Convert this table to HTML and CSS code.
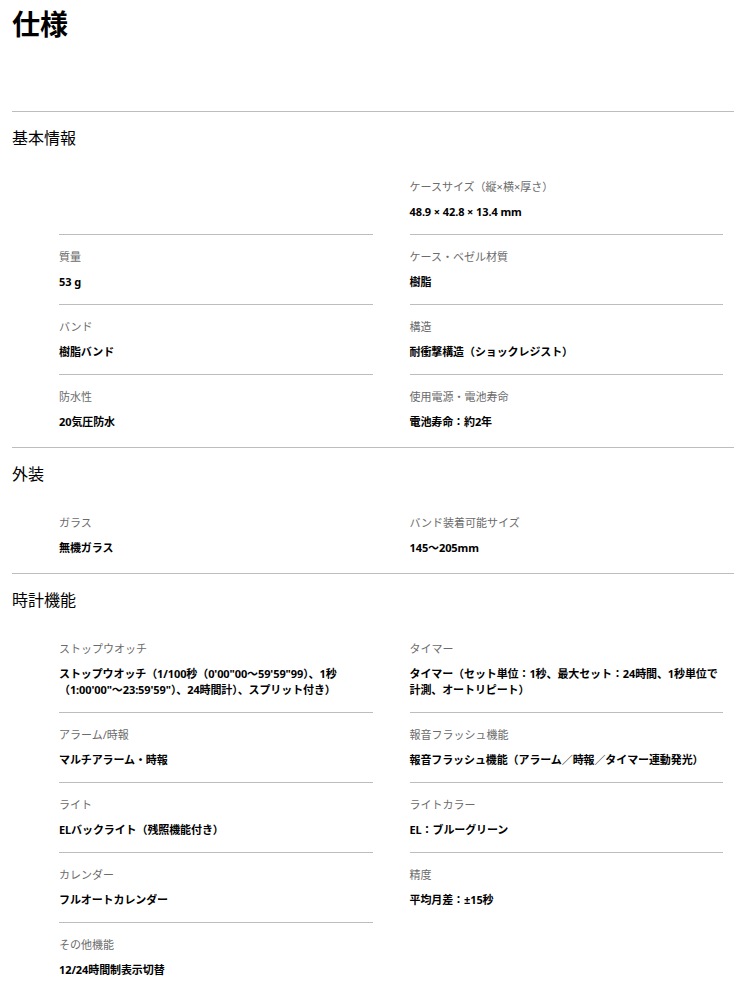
FILE: index.html
```html
<!DOCTYPE html>
<html lang="ja">
<head>
<meta charset="utf-8">
<title>仕様</title>
<link rel="stylesheet" href="styles.css">
</head>
<body>
<div class="page">
  <h1 class="title">仕様</h1>

  <section class="section">
    <h2 class="section-title">基本情報</h2>
    <div class="grid">
      <div class="item"></div>
      <div class="item"><div class="label">ケースサイズ（縦×横×厚さ）</div><div class="value">48.9 × 42.8 × 13.4 mm</div></div>
      <div class="item"><div class="label">質量</div><div class="value">53 g</div></div>
      <div class="item"><div class="label">ケース・ベゼル材質</div><div class="value">樹脂</div></div>
      <div class="item"><div class="label">バンド</div><div class="value">樹脂バンド</div></div>
      <div class="item"><div class="label">構造</div><div class="value">耐衝撃構造（ショックレジスト）</div></div>
      <div class="item last"><div class="label">防水性</div><div class="value">20気圧防水</div></div>
      <div class="item last"><div class="label">使用電源・電池寿命</div><div class="value">電池寿命：約2年</div></div>
    </div>
  </section>

  <section class="section">
    <h2 class="section-title">外装</h2>
    <div class="grid">
      <div class="item last"><div class="label">ガラス</div><div class="value">無機ガラス</div></div>
      <div class="item last"><div class="label">バンド装着可能サイズ</div><div class="value">145～205mm</div></div>
    </div>
  </section>

  <section class="section">
    <h2 class="section-title">時計機能</h2>
    <div class="grid">
      <div class="item"><div class="label">ストップウオッチ</div><div class="value">ストップウオッチ（1/100秒（0'00"00～59'59"99）、1秒（1:00'00"～23:59'59"）、24時間計）、スプリット付き）</div></div>
      <div class="item"><div class="label">タイマー</div><div class="value">タイマー（セット単位：1秒、最大セット：24時間、1秒単位で計測、オートリピート）</div></div>
      <div class="item"><div class="label">アラーム/時報</div><div class="value">マルチアラーム・時報</div></div>
      <div class="item"><div class="label">報音フラッシュ機能</div><div class="value">報音フラッシュ機能（アラーム／時報／タイマー連動発光）</div></div>
      <div class="item"><div class="label">ライト</div><div class="value">ELバックライト（残照機能付き）</div></div>
      <div class="item"><div class="label">ライトカラー</div><div class="value">EL：ブルーグリーン</div></div>
      <div class="item"><div class="label">カレンダー</div><div class="value">フルオートカレンダー</div></div>
      <div class="item last"><div class="label">精度</div><div class="value">平均月差：±15秒</div></div>
      <div class="item last"><div class="label">その他機能</div><div class="value">12/24時間制表示切替</div></div>
    </div>
  </section>
</div>
</body>
</html>
```

FILE: styles.css
```css
html, body {
  margin: 0;
  padding: 0;
  background: #fff;
}

body {
  font-family: "Noto Sans", "Noto Sans CJK JP", sans-serif;
  color: #000;
}

.page {
  padding: 0 0 0 12px;
}

.title {
  margin: 0;
  padding: 5px 0 0;
  height: 111px;
  box-sizing: border-box;
  font-family: "Noto Sans CJK JP", sans-serif;
  font-size: 28px;
  line-height: 36px;
  font-weight: 700;
}

.section {
  border-top: 1px solid #bdbdbd;
}

.section-title {
  margin: 0;
  padding: 13px 0 16px;
  font-family: "Noto Sans CJK JP", sans-serif;
  font-size: 16px;
  line-height: 24px;
  font-weight: 400;
}

.grid {
  display: grid;
  grid-template-columns: 1fr 1fr;
  column-gap: 37px;
  padding: 0 11px 2px 47px;
}

.item {
  padding: 13px 0 14px;
  border-bottom: 1px solid #bdbdbd;
}

.item.last {
  border-bottom-color: transparent;
}

.label {
  font-size: 11px;
  line-height: 18px;
  color: #6b6b6b;
}

.value {
  margin-top: 8px;
  font-size: 11px;
  line-height: 16px;
  font-weight: 700;
  font-stretch: condensed;
  letter-spacing: -0.1px;
  color: #000;
}
```
